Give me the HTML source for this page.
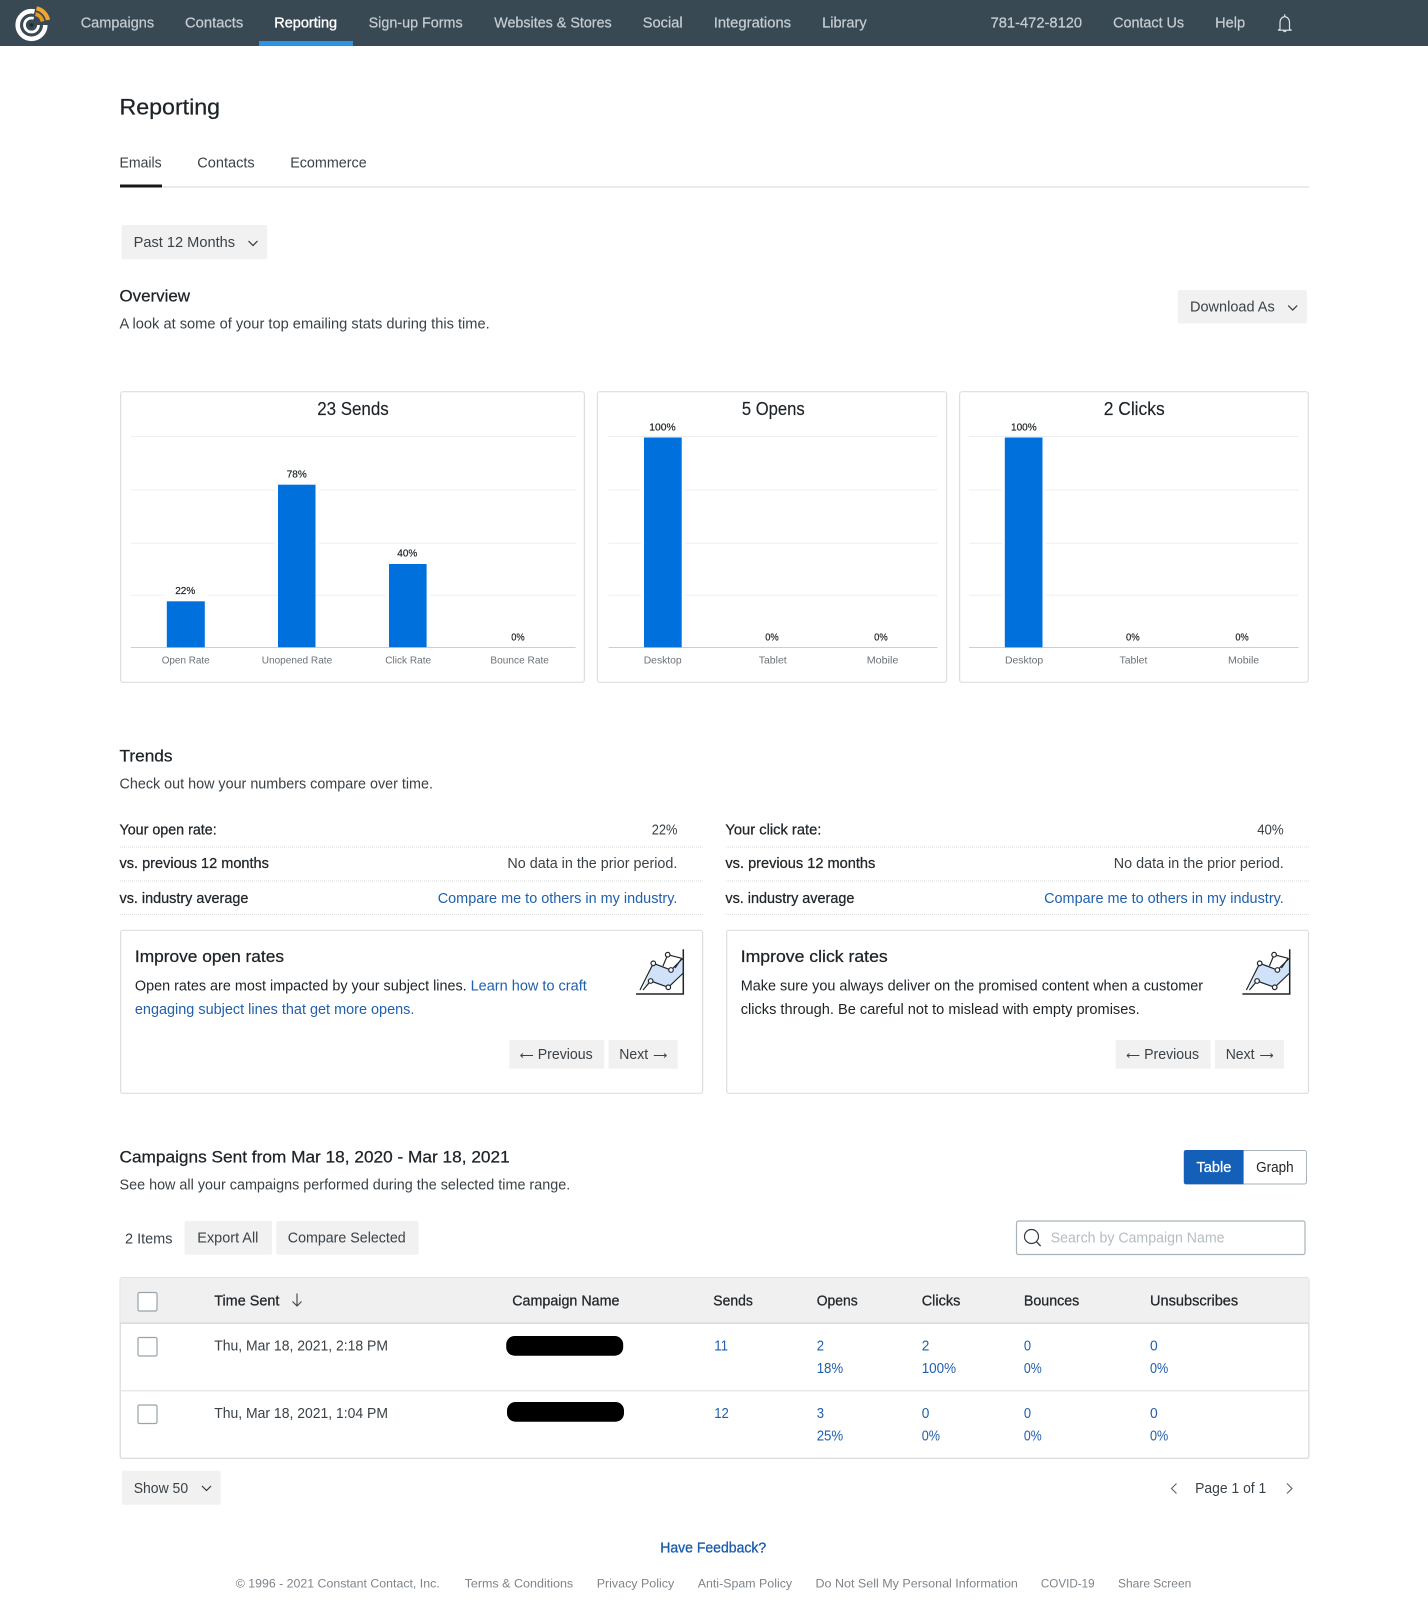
<!DOCTYPE html>
<html lang="en">
<head>
<meta charset="utf-8">
<title>Reporting</title>
<style>
html,body{margin:0;padding:0;background:#fff;width:1428px;height:1600px;overflow:hidden}
svg{display:block;position:absolute;left:0;top:0}
text{font-family:"Liberation Sans",sans-serif;font-size:14.3px;fill:#3a4247;transform:translate(-.3px,-.3px)}
.n{fill:#c6ced3;stroke:#c6ced3;stroke-width:.2}
.d{fill:#1d2327}
.m{fill:#20262a;stroke:#20262a;stroke-width:.25}
.l{fill:#1f5fae}
.s{font-size:10px;fill:#6b7278}
.v{font-size:10px;fill:#1d2327;stroke:#1d2327;stroke-width:.2}
.t{font-size:18.2px;fill:#1d2327;stroke:#1d2327;stroke-width:.15}
.h{font-size:16.3px;fill:#1d2327;stroke:#1d2327;stroke-width:.25}
.f{font-size:12.2px;fill:#7d858b}
.g{stroke:#eceff1;stroke-width:1;fill:none}
.a{stroke:#c6d0d8;stroke-width:1;fill:none}
.c{fill:#fff;stroke:#dcdfe1;stroke-width:1.2}
.b{fill:#f1f1f2}
.bar{fill:#0070dd}
.ch{fill:none;stroke:#30373c;stroke-width:1.2}
.dot{stroke:#d9dcde;stroke-width:1;stroke-dasharray:1 1;fill:none}
.cb{fill:#fff;stroke:#98a3ab;stroke-width:1.2}
.ic{fill:#fff;stroke:#20262a;stroke-width:1.2}
</style>
</head>
<body>
<svg width="1428" height="1600" viewBox="0 0 1428 1600" xmlns="http://www.w3.org/2000/svg">
<!-- NAV -->
<rect x="0" y="0" width="1428" height="46" fill="#394953"/>
<rect x="259" y="41" width="94" height="5" fill="#2a95e6"/>
<!-- logo -->
<circle cx="31.500" cy="25" r="13.800" fill="none" stroke="#fff" stroke-width="4.600" stroke-dasharray="68 18.700"/>
<circle cx="31.500" cy="25" r="7" fill="none" stroke="#fff" stroke-width="2.800" stroke-dasharray="35 9"/>
<circle cx="31.500" cy="25" r="1.800" fill="#20292f"/>
<path d="M36.500 8.300A15 15 0 0 1 48 20" fill="none" stroke="#f0a52e" stroke-width="4.200"/>
<path d="M35.500 14A9.500 9.500 0 0 1 42.500 21.500" fill="none" stroke="#e79a22" stroke-width="3.800"/>
<text class="n" x="81" y="28" textLength="73.400" lengthAdjust="spacingAndGlyphs">Campaigns</text>
<text class="n" x="185.300" y="28" textLength="58.300" lengthAdjust="spacingAndGlyphs">Contacts</text>
<text x="274.600" y="28" textLength="62.800" lengthAdjust="spacingAndGlyphs" style="fill:#fff;stroke:#fff;stroke-width:.35">Reporting</text>
<text class="n" x="368.900" y="28" textLength="94.100" lengthAdjust="spacingAndGlyphs">Sign-up Forms</text>
<text class="n" x="494.500" y="28" textLength="117.500" lengthAdjust="spacingAndGlyphs">Websites &amp; Stores</text>
<text class="n" x="643" y="28" textLength="40" lengthAdjust="spacingAndGlyphs">Social</text>
<text class="n" x="714" y="28" textLength="77.400" lengthAdjust="spacingAndGlyphs">Integrations</text>
<text class="n" x="822.400" y="28" textLength="44.600" lengthAdjust="spacingAndGlyphs">Library</text>
<text class="n" x="990.900" y="28" textLength="91.500" lengthAdjust="spacingAndGlyphs">781-472-8120</text>
<text class="n" x="1113.400" y="28" textLength="71" lengthAdjust="spacingAndGlyphs">Contact Us</text>
<text class="n" x="1215.400" y="28" textLength="30" lengthAdjust="spacingAndGlyphs">Help</text>
<path d="M1284.700 14.300V16.500C1281.500 17.300 1280 19.500 1280 22.500V29.300L1278 30.200H1291.600L1289.500 29.300V22.500C1289.500 19.500 1288 17.300 1284.700 16.500ZM1283.300 30.500Q1284.700 32.800 1286.200 30.500" fill="none" stroke="#dde2e5" stroke-width="1.200"/>

<!-- HEADER -->
<text x="119.800" y="114.800" textLength="100.600" lengthAdjust="spacingAndGlyphs" style="font-size:22.300px;fill:#1d2327;stroke:#1d2327;stroke-width:.25">Reporting</text>
<text x="119.800" y="168" textLength="42.200" lengthAdjust="spacingAndGlyphs">Emails</text>
<text x="197.600" y="168" textLength="57.400" lengthAdjust="spacingAndGlyphs">Contacts</text>
<text x="290.500" y="168" textLength="76.500" lengthAdjust="spacingAndGlyphs">Ecommerce</text>
<rect x="120" y="186.500" width="1189" height="1" fill="#d6d8da"/>
<rect x="120" y="184.500" width="42" height="3" fill="#14181b"/>

<rect class="b" x="121.600" y="225" width="145.700" height="34.300" rx="2"/>
<text x="133.900" y="247.300" textLength="101.500" lengthAdjust="spacingAndGlyphs">Past 12 Months</text>
<path class="ch" d="M248.500 241 L253 245.500 L257.500 241"/>

<text class="h" x="119.800" y="302" textLength="70.500" lengthAdjust="spacingAndGlyphs">Overview</text>
<text x="119.800" y="329" textLength="370.200" lengthAdjust="spacingAndGlyphs">A look at some of your top emailing stats during this time.</text>
<rect class="b" x="1177.800" y="290" width="129.200" height="33.500" rx="2"/>
<text x="1190.300" y="312" textLength="84.700" lengthAdjust="spacingAndGlyphs">Download As</text>
<path class="ch" d="M1288.200 305.500 L1292.700 310 L1297.200 305.500"/>

<!-- CARD 1 -->
<rect class="c" x="120.600" y="391.700" width="463.800" height="290.600" rx="2.500"/>
<text class="t" x="317.500" y="415.400" textLength="71.500" lengthAdjust="spacingAndGlyphs">23 Sends</text>
<path class="g" d="M130.800 436.500H575.700M130.800 490H575.700M130.800 543.300H575.700M130.800 595.300H575.700"/>
<path class="a" d="M130.800 647.500H575.700"/>
<rect fill="#fff" x="163.500" y="580" width="44.500" height="20"/>
<rect fill="#fff" x="275" y="487" width="44" height="60"/>
<rect fill="#fff" x="385.500" y="575" width="44.500" height="22"/>
<rect class="bar" x="166.800" y="601.300" width="38" height="46"/>
<rect class="bar" x="278" y="484.700" width="37.500" height="162.500"/>
<rect class="bar" x="389" y="564" width="37.600" height="83.200"/>
<text class="v" x="175.500" y="594.300" textLength="20" lengthAdjust="spacingAndGlyphs">22%</text>
<text class="v" x="287" y="477.700" textLength="20" lengthAdjust="spacingAndGlyphs">78%</text>
<text class="v" x="397.600" y="556.700" textLength="20" lengthAdjust="spacingAndGlyphs">40%</text>
<text class="v" x="511.500" y="641" textLength="13.400" lengthAdjust="spacingAndGlyphs">0%</text>
<text class="s" x="162" y="664" textLength="48" lengthAdjust="spacingAndGlyphs">Open Rate</text>
<text class="s" x="262" y="664" textLength="70.500" lengthAdjust="spacingAndGlyphs">Unopened Rate</text>
<text class="s" x="385.500" y="664" textLength="45.900" lengthAdjust="spacingAndGlyphs">Click Rate</text>
<text class="s" x="490.700" y="664" textLength="58.500" lengthAdjust="spacingAndGlyphs">Bounce Rate</text>

<!-- CARD 2 -->
<rect class="c" x="597.400" y="391.700" width="349.200" height="290.600" rx="2.500"/>
<text class="t" x="742.200" y="415.400" textLength="62.800" lengthAdjust="spacingAndGlyphs">5 Opens</text>
<path class="g" d="M608.600 436.500H937.300M608.600 490H937.300M608.600 543.300H937.300M608.600 595.300H937.300"/>
<path class="a" d="M608.600 647.500H937.300"/>
<rect fill="#fff" x="641" y="438" width="44" height="208"/>
<rect class="bar" x="644" y="437.500" width="37.700" height="209.800"/>
<text class="v" x="649.600" y="430.700" textLength="26.400" lengthAdjust="spacingAndGlyphs">100%</text>
<text class="v" x="765.500" y="641" textLength="13.500" lengthAdjust="spacingAndGlyphs">0%</text>
<text class="v" x="874.400" y="641" textLength="13.600" lengthAdjust="spacingAndGlyphs">0%</text>
<text class="s" x="644" y="664" textLength="38" lengthAdjust="spacingAndGlyphs">Desktop</text>
<text class="s" x="759" y="664" textLength="28" lengthAdjust="spacingAndGlyphs">Tablet</text>
<text class="s" x="867" y="664" textLength="31.700" lengthAdjust="spacingAndGlyphs">Mobile</text>

<!-- CARD 3 -->
<rect class="c" x="959.600" y="391.700" width="348.700" height="290.600" rx="2.500"/>
<text class="t" x="1104" y="415.400" textLength="61" lengthAdjust="spacingAndGlyphs">2 Clicks</text>
<path class="g" d="M969 436.500H1298.600M969 490H1298.600M969 543.300H1298.600M969 595.300H1298.600"/>
<path class="a" d="M969 647.500H1298.600"/>
<rect fill="#fff" x="1001.800" y="438" width="44" height="208"/>
<rect class="bar" x="1004.800" y="437.500" width="37.700" height="209.800"/>
<text class="v" x="1011.300" y="430.700" textLength="25.700" lengthAdjust="spacingAndGlyphs">100%</text>
<text class="v" x="1126.300" y="641" textLength="13.700" lengthAdjust="spacingAndGlyphs">0%</text>
<text class="v" x="1235.700" y="641" textLength="13.300" lengthAdjust="spacingAndGlyphs">0%</text>
<text class="s" x="1005.300" y="664" textLength="38.200" lengthAdjust="spacingAndGlyphs">Desktop</text>
<text class="s" x="1119.800" y="664" textLength="27.900" lengthAdjust="spacingAndGlyphs">Tablet</text>
<text class="s" x="1228.300" y="664" textLength="31.200" lengthAdjust="spacingAndGlyphs">Mobile</text>

<!-- TRENDS -->
<text class="h" x="119.800" y="761.700" textLength="53" lengthAdjust="spacingAndGlyphs">Trends</text>
<text x="119.800" y="789" textLength="313.500" lengthAdjust="spacingAndGlyphs">Check out how your numbers compare over time.</text>

<!-- left trends -->
<text class="m" x="119.800" y="834.700" textLength="97.200" lengthAdjust="spacingAndGlyphs">Your open rate:</text>
<text x="652" y="834.700" textLength="25.700" lengthAdjust="spacingAndGlyphs">22%</text>
<path class="dot" d="M120 847H703M120 881H703M120 914.500H703"/>
<text class="m" x="119.800" y="868.300" textLength="149.400" lengthAdjust="spacingAndGlyphs">vs. previous 12 months</text>
<text x="507.700" y="868.300" textLength="170" lengthAdjust="spacingAndGlyphs">No data in the prior period.</text>
<text class="m" x="119.800" y="903.300" textLength="128.900" lengthAdjust="spacingAndGlyphs">vs. industry average</text>
<text class="l" x="438" y="903.300" textLength="239.700" lengthAdjust="spacingAndGlyphs">Compare me to others in my industry.</text>

<rect class="c" x="120.600" y="930.300" width="582" height="163" rx="2"/>
<text x="135.200" y="962.300" textLength="149.100" lengthAdjust="spacingAndGlyphs" style="font-size:16.300px;fill:#1d2327;stroke:#1d2327;stroke-width:.25">Improve open rates</text>
<text class="d" x="135.200" y="991" textLength="331.800" lengthAdjust="spacingAndGlyphs">Open rates are most impacted by your subject lines.</text>
<text class="l" x="470.900" y="991" textLength="116.200" lengthAdjust="spacingAndGlyphs">Learn how to craft</text>
<text class="l" x="135.200" y="1014.300" textLength="279.500" lengthAdjust="spacingAndGlyphs">engaging subject lines that get more opens.</text>
<rect class="b" x="509.300" y="1040" width="94.900" height="28.700"/>
<rect class="b" x="608.500" y="1040" width="69.200" height="28.700"/>
<path d="M520.500 1055.500H533M520.500 1055.500L523 1053.500M520.500 1055.500L523 1057.500" fill="none" stroke="#3a4247" stroke-width=".9"/>
<text x="538" y="1059.300" textLength="55" lengthAdjust="spacingAndGlyphs">Previous</text>
<text x="619.600" y="1059.300" textLength="28.800" lengthAdjust="spacingAndGlyphs">Next</text>
<path d="M653.800 1055.500H666.500M666.500 1055.500L664 1053.500M666.500 1055.500L664 1057.500" fill="none" stroke="#3a4247" stroke-width=".9"/>
<!-- chart icon left -->
<g>
<path d="M653.300 963.300L671 970L683.300 960V973.300L668.300 987.300L650.700 981L644 987Z" fill="#cfe2fa"/>
<path d="M636 994H683.300V949.300" fill="none" stroke="#20262a" stroke-width="1.500"/>
<path d="M640 990L653.300 963.300L671 970L683.300 958M643 990L650.700 981L668.300 987.300L683.300 973M663 966L667.700 954.700L681.700 958.300" fill="none" stroke="#20262a" stroke-width="1.200"/>
<path d="M681.700 958.300L675 968" fill="none" stroke="#20262a" stroke-width="1.200"/>
<circle class="ic" cx="653.300" cy="963.300" r="2.300"/><circle class="ic" cx="671" cy="970" r="2.300"/><circle class="ic" cx="667.700" cy="954.700" r="2.300"/><circle class="ic" cx="650.700" cy="981" r="2.300"/><circle class="ic" cx="668.300" cy="987.300" r="2.300"/>
</g>

<!-- right trends -->
<text class="m" x="725.700" y="834.700" textLength="96" lengthAdjust="spacingAndGlyphs">Your click rate:</text>
<text x="1257.500" y="834.700" textLength="26.500" lengthAdjust="spacingAndGlyphs">40%</text>
<path class="dot" d="M726 847H1309M726 881H1309M726 914.500H1309"/>
<text class="m" x="725.700" y="868.300" textLength="149.900" lengthAdjust="spacingAndGlyphs">vs. previous 12 months</text>
<text x="1114.100" y="868.300" textLength="170" lengthAdjust="spacingAndGlyphs">No data in the prior period.</text>
<text class="m" x="725.700" y="903.300" textLength="129" lengthAdjust="spacingAndGlyphs">vs. industry average</text>
<text class="l" x="1044.400" y="903.300" textLength="239.700" lengthAdjust="spacingAndGlyphs">Compare me to others in my industry.</text>

<rect class="c" x="726.700" y="930.300" width="581.800" height="163" rx="2"/>
<text x="741" y="962.300" textLength="147" lengthAdjust="spacingAndGlyphs" style="font-size:16.300px;fill:#1d2327;stroke:#1d2327;stroke-width:.25">Improve click rates</text>
<text class="d" x="741" y="991" textLength="462.400" lengthAdjust="spacingAndGlyphs">Make sure you always deliver on the promised content when a customer</text>
<text class="d" x="741" y="1014.300" textLength="399" lengthAdjust="spacingAndGlyphs">clicks through. Be careful not to mislead with empty promises.</text>
<rect class="b" x="1115.700" y="1040" width="94.900" height="28.700"/>
<rect class="b" x="1214.900" y="1040" width="69.200" height="28.700"/>
<path d="M1126.900 1055.500H1139.400M1126.900 1055.500L1129.400 1053.500M1126.900 1055.500L1129.400 1057.500" fill="none" stroke="#3a4247" stroke-width=".9"/>
<text x="1144.400" y="1059.300" textLength="55" lengthAdjust="spacingAndGlyphs">Previous</text>
<text x="1226" y="1059.300" textLength="28.800" lengthAdjust="spacingAndGlyphs">Next</text>
<path d="M1260.200 1055.500H1272.900M1272.900 1055.500L1270.400 1053.500M1272.900 1055.500L1270.400 1057.500" fill="none" stroke="#3a4247" stroke-width=".9"/>
<g transform="translate(606.400 0)">
<path d="M653.300 963.300L671 970L683.300 960V973.300L668.300 987.300L650.700 981L644 987Z" fill="#cfe2fa"/>
<path d="M636 994H683.300V949.300" fill="none" stroke="#20262a" stroke-width="1.500"/>
<path d="M640 990L653.300 963.300L671 970L683.300 958M643 990L650.700 981L668.300 987.300L683.300 973M663 966L667.700 954.700L681.700 958.300" fill="none" stroke="#20262a" stroke-width="1.200"/>
<path d="M681.700 958.300L675 968" fill="none" stroke="#20262a" stroke-width="1.200"/>
<circle class="ic" cx="653.300" cy="963.300" r="2.300"/><circle class="ic" cx="671" cy="970" r="2.300"/><circle class="ic" cx="667.700" cy="954.700" r="2.300"/><circle class="ic" cx="650.700" cy="981" r="2.300"/><circle class="ic" cx="668.300" cy="987.300" r="2.300"/>
</g>

<!-- CAMPAIGNS -->
<text class="h" x="119.800" y="1162.700" textLength="390.200" lengthAdjust="spacingAndGlyphs">Campaigns Sent from Mar 18, 2020 - Mar 18, 2021</text>
<text x="119.800" y="1190" textLength="450.700" lengthAdjust="spacingAndGlyphs">See how all your campaigns performed during the selected time range.</text>
<rect x="1184" y="1150.500" width="122.500" height="33.500" rx="2" fill="#fff" stroke="#aab3b9" stroke-width="1"/>
<path d="M1186 1150H1243.600V1184.300H1186Q1184 1184.300 1184 1182.300V1152Q1184 1150 1186 1150Z" fill="#1460b8"/>
<text x="1196.700" y="1172.300" textLength="35" lengthAdjust="spacingAndGlyphs" style="fill:#fff;stroke:#fff;stroke-width:.25">Table</text>
<text class="d" x="1256.400" y="1172.300" textLength="37.500" lengthAdjust="spacingAndGlyphs">Graph</text>

<text x="125.300" y="1244" textLength="47.500" lengthAdjust="spacingAndGlyphs">2 Items</text>
<rect class="b" x="184.600" y="1221" width="87.500" height="33.700" rx="2"/>
<rect class="b" x="276.300" y="1221" width="142.300" height="33.700" rx="2"/>
<text x="197.600" y="1243" textLength="61.100" lengthAdjust="spacingAndGlyphs">Export All</text>
<text x="288.100" y="1243" textLength="117.900" lengthAdjust="spacingAndGlyphs">Compare Selected</text>

<rect x="1016.500" y="1221" width="288.500" height="33.500" rx="2" fill="#fff" stroke="#a9b3ba" stroke-width="1.200"/>
<circle cx="1031.500" cy="1236.500" r="7" fill="none" stroke="#343b40" stroke-width="1.200"/>
<path d="M1036.500 1241.700L1040.600 1246" fill="none" stroke="#343b40" stroke-width="1.300"/>
<text x="1051" y="1243" textLength="173.800" lengthAdjust="spacingAndGlyphs" style="fill:#b5bdc3">Search by Campaign Name</text>

<!-- TABLE -->
<rect x="120.200" y="1277.700" width="1188.600" height="180.600" rx="2" fill="#fff" stroke="#d6d8da" stroke-width="1.200"/>
<path d="M122.200 1277.700H1306.800Q1308.800 1277.700 1308.800 1279.700V1323H120.200V1279.700Q120.200 1277.700 122.200 1277.700Z" fill="#f0f0f1"/>
<rect x="120" y="1322.600" width="1189" height="1.200" fill="#d2d4d6"/>
<rect x="120" y="1390.200" width="1189" height="1.100" fill="#dfe1e3"/>
<rect class="cb" x="138" y="1292.500" width="19" height="18.500" rx="1.500"/>
<rect class="cb" x="138" y="1337.500" width="19" height="18.500" rx="1.500"/>
<rect class="cb" x="138" y="1405" width="19" height="18.500" rx="1.500"/>
<text class="m" x="214.500" y="1305.700" textLength="65.200" lengthAdjust="spacingAndGlyphs">Time Sent</text>
<path d="M297 1293.500V1306M292.500 1301.500L297 1306L301.500 1301.500" fill="none" stroke="#3a4247" stroke-width="1.100"/>
<text class="m" x="512.500" y="1305.700" textLength="107.300" lengthAdjust="spacingAndGlyphs">Campaign Name</text>
<text class="m" x="713.600" y="1305.700" textLength="39.600" lengthAdjust="spacingAndGlyphs">Sends</text>
<text class="m" x="817" y="1305.700" textLength="41" lengthAdjust="spacingAndGlyphs">Opens</text>
<text class="m" x="922" y="1305.700" textLength="38.700" lengthAdjust="spacingAndGlyphs">Clicks</text>
<text class="m" x="1024.200" y="1305.700" textLength="55.400" lengthAdjust="spacingAndGlyphs">Bounces</text>
<text class="m" x="1150.300" y="1305.700" textLength="88.200" lengthAdjust="spacingAndGlyphs">Unsubscribes</text>

<text x="214.500" y="1351" textLength="173.800" lengthAdjust="spacingAndGlyphs">Thu, Mar 18, 2021, 2:18 PM</text>
<rect x="506.200" y="1336" width="117" height="19.700" rx="8.500" fill="#000"/>
<text class="l" x="714.500" y="1351" textLength="13.800" lengthAdjust="spacingAndGlyphs">11</text>
<text class="l" x="817" y="1351" textLength="7.300" lengthAdjust="spacingAndGlyphs">2</text>
<text class="l" x="817" y="1373.300" textLength="26.500" lengthAdjust="spacingAndGlyphs">18%</text>
<text class="l" x="922" y="1351" textLength="7.600" lengthAdjust="spacingAndGlyphs">2</text>
<text class="l" x="922" y="1373.300" textLength="34.400" lengthAdjust="spacingAndGlyphs">100%</text>
<text class="l" x="1024.200" y="1351" textLength="7.200" lengthAdjust="spacingAndGlyphs">0</text>
<text class="l" x="1024.200" y="1373.300" textLength="17.800" lengthAdjust="spacingAndGlyphs">0%</text>
<text class="l" x="1150.300" y="1351" textLength="7.700" lengthAdjust="spacingAndGlyphs">0</text>
<text class="l" x="1150.300" y="1373.300" textLength="18.300" lengthAdjust="spacingAndGlyphs">0%</text>

<text x="214.500" y="1418.300" textLength="173.800" lengthAdjust="spacingAndGlyphs">Thu, Mar 18, 2021, 1:04 PM</text>
<rect x="507" y="1402" width="117" height="19.700" rx="8.500" fill="#000"/>
<text class="l" x="714.500" y="1418.300" textLength="14.700" lengthAdjust="spacingAndGlyphs">12</text>
<text class="l" x="817" y="1418.300" textLength="7.300" lengthAdjust="spacingAndGlyphs">3</text>
<text class="l" x="817" y="1441" textLength="26.500" lengthAdjust="spacingAndGlyphs">25%</text>
<text class="l" x="922" y="1418.300" textLength="7.600" lengthAdjust="spacingAndGlyphs">0</text>
<text class="l" x="922" y="1441" textLength="18.300" lengthAdjust="spacingAndGlyphs">0%</text>
<text class="l" x="1024.200" y="1418.300" textLength="7.200" lengthAdjust="spacingAndGlyphs">0</text>
<text class="l" x="1024.200" y="1441" textLength="17.800" lengthAdjust="spacingAndGlyphs">0%</text>
<text class="l" x="1150.300" y="1418.300" textLength="7.700" lengthAdjust="spacingAndGlyphs">0</text>
<text class="l" x="1150.300" y="1441" textLength="18.300" lengthAdjust="spacingAndGlyphs">0%</text>

<!-- PAGER -->
<rect class="b" x="121.900" y="1470.700" width="98.900" height="34" rx="2"/>
<text x="134" y="1493.300" textLength="54.400" lengthAdjust="spacingAndGlyphs">Show 50</text>
<path class="ch" d="M202 1486 L206.500 1490.500 L211 1486"/>
<path d="M1176.500 1483.500L1171.500 1488.500L1176.500 1493.500" fill="none" stroke="#59626a" stroke-width="1.100"/>
<text x="1195.400" y="1493.300" textLength="71.200" lengthAdjust="spacingAndGlyphs">Page 1 of 1</text>
<path d="M1287 1483.500L1292 1488.500L1287 1493.500" fill="none" stroke="#59626a" stroke-width="1.100"/>

<!-- FOOTER -->
<text x="660.500" y="1552.700" textLength="106" lengthAdjust="spacingAndGlyphs" style="fill:#1a5bab;stroke:#1a5bab;stroke-width:.3">Have Feedback?</text>
<text class="f" x="236" y="1587.700" textLength="204" lengthAdjust="spacingAndGlyphs">© 1996 - 2021 Constant Contact, Inc.</text>
<text class="f" x="464.900" y="1587.700" textLength="108.600" lengthAdjust="spacingAndGlyphs">Terms &amp; Conditions</text>
<text class="f" x="597" y="1587.700" textLength="77.500" lengthAdjust="spacingAndGlyphs">Privacy Policy</text>
<text class="f" x="698" y="1587.700" textLength="94.400" lengthAdjust="spacingAndGlyphs">Anti-Spam Policy</text>
<text class="f" x="815.800" y="1587.700" textLength="202.400" lengthAdjust="spacingAndGlyphs">Do Not Sell My Personal Information</text>
<text class="f" x="1041.200" y="1587.700" textLength="53.700" lengthAdjust="spacingAndGlyphs">COVID-19</text>
<text class="f" x="1118.300" y="1587.700" textLength="73.300" lengthAdjust="spacingAndGlyphs">Share Screen</text>
</svg>
</body>
</html>
